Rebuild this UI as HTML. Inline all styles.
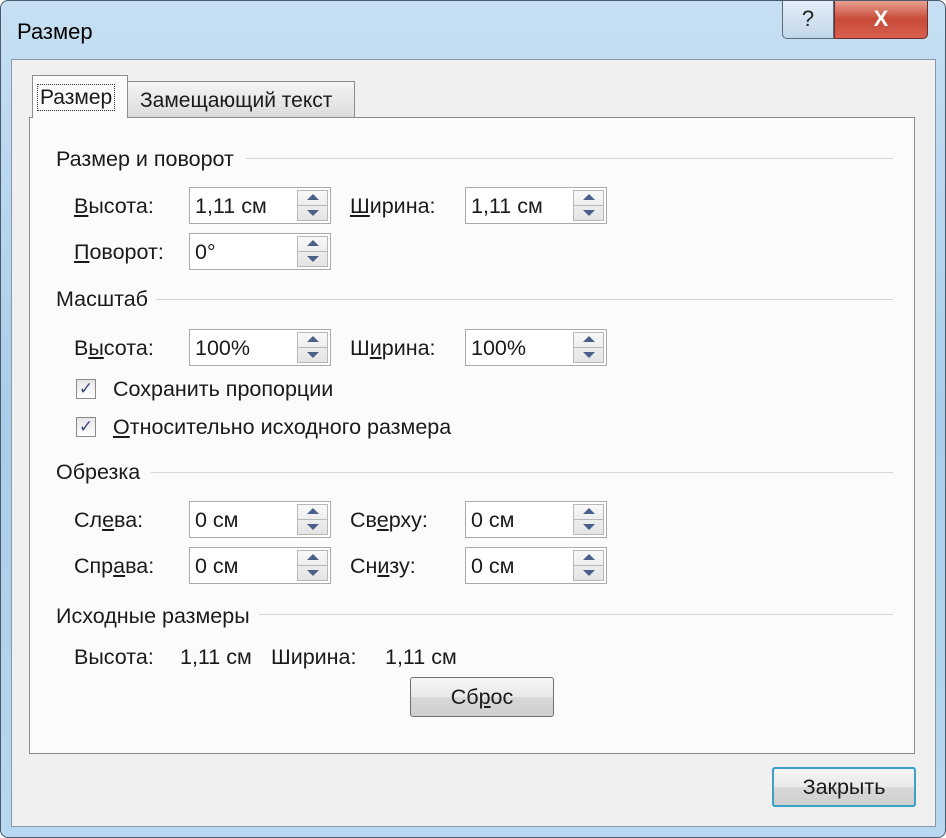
<!DOCTYPE html>
<html><head><meta charset="utf-8"><style>
*{box-sizing:border-box;margin:0;padding:0}
body{width:946px;height:838px;overflow:hidden;font-family:"Liberation Sans","DejaVu Sans",sans-serif;font-size:21.5px;color:#1a1a1a;background:#fff}
.win{position:absolute;left:0;top:0;width:946px;height:838px;border:1px solid #4a5a6a;border-radius:8px;background:linear-gradient(180deg,#c6dff3 0%,#a9cdea 50%,#b8d7f0 100%)}
.title{position:absolute;left:16px;top:18px;font-size:22px;color:#000}
.client{position:absolute;left:10px;top:58px;width:925px;height:768px;background:#f0f0f0;border:1px solid #8a9aaa}
.panel{position:absolute;left:28px;top:116px;width:886px;height:637px;background:#fbfbfb;border:1px solid #8c8c8c}
.tab{position:absolute;font-size:21px;border:1px solid #8c8c8c;border-bottom:none}
.a{position:absolute;white-space:nowrap}
.hr{position:absolute;height:1px;background:#d5d5d5}
.inp{position:absolute;width:142px;height:37px;background:#fff;border:1px solid #aaa;padding:6px 0 0 5px}
.sp{position:absolute;right:2px;top:2px;width:31px;height:31px;border:1px solid #b8b8b8;background:linear-gradient(#f8f8f8,#e4e4e4)}
.sp:after{content:"";position:absolute;left:0;right:0;top:14px;height:1px;background:#b8b8b8}
.up{position:absolute;left:9px;top:3px;width:0;height:0;border-left:6px solid transparent;border-right:6px solid transparent;border-bottom:6px solid #4a5f8a}
.dn{position:absolute;left:9px;top:19px;width:0;height:0;border-left:6px solid transparent;border-right:6px solid transparent;border-top:6px solid #4a5f8a}
.cb{position:absolute;width:20px;height:20px;border:1px solid #8a8a8a;background:linear-gradient(#e6e6e6,#fff);font-size:17px;line-height:18px;text-align:center;color:#3a4a7a}
.btn{position:absolute;border:1px solid #707070;border-radius:3px;background:linear-gradient(#f6f6f6 0%,#e9e9e9 50%,#d8d8d8 51%,#cfcfcf 100%);text-align:center}
u{text-decoration:underline}
</style></head><body>
<div class="win">
<div class="title">Размер</div>
<div style="position:absolute;left:781px;top:0;width:52px;height:38px;border:1px solid #5a6a7a;border-top:none;border-radius:0 0 0 5px;background:linear-gradient(#e4eef8,#c2d6ea);text-align:center;font-size:22px;line-height:36px;color:#222">?</div>
<div style="position:absolute;left:833px;top:0;width:94px;height:38px;border:1px solid #6a3030;border-top:none;border-radius:0 0 5px 0;background:linear-gradient(#e8a090,#c84a38 50%,#d86050);text-align:center;font-size:22px;line-height:36px;color:#fff;font-weight:bold">X</div>
<div class="client"></div>
<div class="panel"></div>
<div class="tab" style="left:126px;top:80px;width:228px;height:36px;background:linear-gradient(#f4f4f4,#dcdcdc);padding:7px 0 0 12px">Замещающий текст</div>
<div class="tab" style="left:31px;top:74px;width:96px;height:43px;background:#fbfbfb;padding:10px 0 0 5px"><span style="outline:1px dotted #333;padding:1px 2px">Размер</span></div>

<div class="a" style="left:55px;top:146px">Размер и поворот</div><div class="hr" style="left:245px;top:157px;width:647px"></div>
<div class="a" style="left:73px;top:193px"><u>В</u>ысота:</div>
<div class="inp" style="left:188px;top:186px">1,11 см<div class="sp"><i class="up"></i><i class="dn"></i></div></div>
<div class="a" style="left:349px;top:193px"><u>Ш</u>ирина:</div>
<div class="inp" style="left:464px;top:186px">1,11 см<div class="sp"><i class="up"></i><i class="dn"></i></div></div>
<div class="a" style="left:73px;top:239px"><u>П</u>оворот:</div>
<div class="inp" style="left:188px;top:232px">0°<div class="sp"><i class="up"></i><i class="dn"></i></div></div>

<div class="a" style="left:55px;top:286px">Масштаб</div><div class="hr" style="left:155px;top:298px;width:737px"></div>
<div class="a" style="left:73px;top:335px">В<u>ы</u>сота:</div>
<div class="inp" style="left:188px;top:328px">100%<div class="sp"><i class="up"></i><i class="dn"></i></div></div>
<div class="a" style="left:349px;top:335px">Ш<u>и</u>рина:</div>
<div class="inp" style="left:464px;top:328px">100%<div class="sp"><i class="up"></i><i class="dn"></i></div></div>
<div class="cb" style="left:75px;top:378px">✓</div><div class="a" style="left:112px;top:376px">Сохранить пропорции</div>
<div class="cb" style="left:75px;top:416px">✓</div><div class="a" style="left:112px;top:414px"><u>О</u>тносительно исходного размера</div>

<div class="a" style="left:55px;top:459px">Обрезка</div><div class="hr" style="left:150px;top:471px;width:742px"></div>
<div class="a" style="left:73px;top:507px">Сл<u>е</u>ва:</div>
<div class="inp" style="left:188px;top:500px">0 см<div class="sp"><i class="up"></i><i class="dn"></i></div></div>
<div class="a" style="left:349px;top:507px">Св<u>е</u>рху:</div>
<div class="inp" style="left:464px;top:500px">0 см<div class="sp"><i class="up"></i><i class="dn"></i></div></div>
<div class="a" style="left:73px;top:553px">Спр<u>а</u>ва:</div>
<div class="inp" style="left:188px;top:546px">0 см<div class="sp"><i class="up"></i><i class="dn"></i></div></div>
<div class="a" style="left:349px;top:553px">Сн<u>и</u>зу:</div>
<div class="inp" style="left:464px;top:546px">0 см<div class="sp"><i class="up"></i><i class="dn"></i></div></div>

<div class="a" style="left:55px;top:603px">Исходные размеры</div><div class="hr" style="left:258px;top:613px;width:634px"></div>
<div class="a" style="left:73px;top:644px">Высота:</div><div class="a" style="left:179px;top:644px">1,11 см</div>
<div class="a" style="left:270px;top:644px">Ширина:</div><div class="a" style="left:384px;top:644px">1,11 см</div>
<div class="btn" style="left:409px;top:676px;width:144px;height:40px;line-height:38px">Сб<u>р</u>ос</div>
<div class="btn" style="left:771px;top:766px;width:144px;height:40px;line-height:36px;border:2px solid #3aa0c8">Закрыть</div>
</div>
</body></html>
